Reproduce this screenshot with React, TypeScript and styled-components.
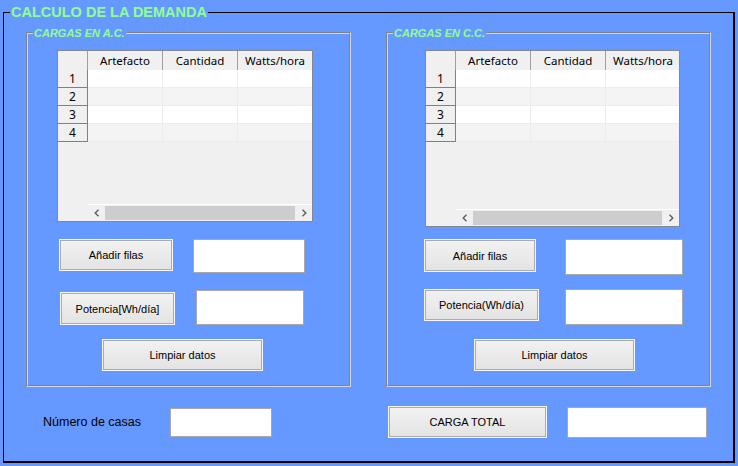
import React from "react";
import styled, { createGlobalStyle } from "styled-components";

const Global = createGlobalStyle`
  *, *::before, *::after { box-sizing: border-box; }
  html, body { margin: 0; padding: 0; background: #6699ff; }
  body { font-family: "Liberation Sans", Arial, sans-serif; }
  #root { width: 738px; height: 466px; overflow: hidden; }
`;

const Page = styled.div`
  padding: 4px 3px 0 3px;
`;

const Frame = styled.fieldset`
  width: 732px;
  margin: 0;
  padding: 0;
  min-inline-size: 0;
  border-style: solid;
  border-color: #000;
  border-width: 1px 2px 2px 1px;
`;

const FrameTitle = styled.legend`
  margin-left: 6px;
  padding: 0 1px;
  font: bold 14.5px/17px "Liberation Sans", Arial, sans-serif;
  color: #90ff90;
`;

const FrameBody = styled.div`
  padding: 5px 0 23px 22px;
`;

const Panels = styled.div`
  display: flex;
  gap: 35px;
`;

const Panel = styled.fieldset`
  width: 325px;
  margin: 0;
  padding: 0 0 14px 0;
  min-inline-size: 0;
  border: 2px groove #d6d6d6;
`;

const PanelTitle = styled.legend`
  margin-left: 5px;
  padding: 0 1px;
  font: italic bold 11px/14px "Liberation Sans", Arial, sans-serif;
  color: #90ff90;
`;

const PanelBody = styled.div`
  padding-top: 10px;
  display: flex;
  flex-direction: column;
`;

const TableBox = styled.div<{ $w: number; $h: number; $x: number }>`
  width: ${(p) => p.$w}px;
  height: ${(p) => p.$h}px;
  margin-left: ${(p) => p.$x}px;
  border: 1px solid #828790;
  background: #f0f0f0;
  display: flex;
  flex-direction: column;
  overflow: hidden;
  font-family: "Noto Sans", "Open Sans", sans-serif;
  font-size: 11.5px;
  color: #000;
`;

const GridRow = styled.div`
  display: flex;
  flex: none;
`;

const Corner = styled.div`
  flex: none;
  width: 30px;
  height: 19px;
  border-right: 1px solid #a0a0a0;
  background: #f0f0f0;
`;

const HeadCell = styled.div`
  flex: none;
  width: 75px;
  height: 19px;
  border-right: 1px solid #a0a0a0;
  background: #f0f0f0;
  display: flex;
  align-items: center;
  justify-content: center;
  white-space: nowrap;
`;

const RowHead = styled.div`
  flex: none;
  width: 30px;
  height: 18px;
  border-right: 1px solid #808080;
  border-bottom: 1px solid #808080;
  background: #f0f0f0;
  display: flex;
  align-items: center;
  justify-content: center;
  font-size: 12px;
`;

const DataCell = styled.div<{ $alt: boolean }>`
  flex: none;
  width: 75px;
  height: 18px;
  border-right: 1px solid #ececec;
  border-bottom: 1px solid #ececec;
  background: ${(p) => (p.$alt ? "#f4f4f4" : "#ffffff")};
`;

const ScrollRow = styled.div`
  margin-top: auto;
  padding-left: 30px;
  display: flex;
  height: 17px;
  flex: none;
`;

const ScrollBar = styled.div`
  flex: 1;
  display: flex;
  border-top: 1px solid #ffffff;
  background: #f0f0f0;
`;

const ScrollArrow = styled.div`
  flex: none;
  width: 17px;
  display: flex;
  align-items: center;
  justify-content: center;
`;

const Thumb = styled.div`
  flex: 1;
  margin: 1px 0;
  background: #cdcdcd;
`;

const Row = styled.div<{ $top: number; $left: number; $gap: number }>`
  display: flex;
  align-items: flex-start;
  margin-top: ${(p) => p.$top}px;
  padding-left: ${(p) => p.$left}px;
  gap: ${(p) => p.$gap}px;
`;

const Btn = styled.button<{ $w: number; $h: number; $dy?: number; $ml?: number }>`
  flex: none;
  width: ${(p) => p.$w}px;
  height: ${(p) => p.$h}px;
  margin: ${(p) => p.$dy ?? 0}px 0 0 ${(p) => p.$ml ?? 0}px;
  padding: 0;
  border: 1px solid #f6f6f6;
  box-shadow: inset 0 0 0 1px #acacac;
  background: linear-gradient(#f2f2f2, #e3e3e3);
  font: 11px "Liberation Sans", Arial, sans-serif;
  color: #000;
`;

const Field = styled.input<{ $w: number; $h: number; $ml?: number }>`
  flex: none;
  width: ${(p) => p.$w}px;
  height: ${(p) => p.$h}px;
  margin: 0 0 0 ${(p) => p.$ml ?? 0}px;
  padding: 0;
  border: 1px solid #a8a8a8;
  background: #fff;
  outline: none;
`;

const BottomRow = styled.div`
  display: flex;
  align-items: center;
  margin-top: 19px;
`;

const Label = styled.div`
  flex: none;
  width: 127px;
  margin-left: 17px;
  font: 12.5px "Liberation Sans", Arial, sans-serif;
  color: #000;
`;

const Chevron = ({ dir }: { dir: "l" | "r" }) => (
  <svg width="6" height="8" viewBox="0 0 6 8">
    <polyline
      points={dir === "l" ? "4.5,0.8 1.2,4 4.5,7.2" : "1.5,0.8 4.8,4 1.5,7.2"}
      fill="none"
      stroke="#5f5f5f"
      strokeWidth="1.4"
    />
  </svg>
);

const DataTable = ({ w, h, x }: { w: number; h: number; x: number }) => (
  <TableBox $w={w} $h={h} $x={x}>
    <GridRow>
      <Corner />
      <HeadCell>Artefacto</HeadCell>
      <HeadCell>Cantidad</HeadCell>
      <HeadCell>Watts/hora</HeadCell>
    </GridRow>
    {[1, 2, 3, 4].map((n) => (
      <GridRow key={n}>
        <RowHead>{n}</RowHead>
        <DataCell $alt={n % 2 === 0} />
        <DataCell $alt={n % 2 === 0} />
        <DataCell $alt={n % 2 === 0} />
      </GridRow>
    ))}
    <ScrollRow>
      <ScrollBar>
        <ScrollArrow>
          <Chevron dir="l" />
        </ScrollArrow>
        <Thumb />
        <ScrollArrow>
          <Chevron dir="r" />
        </ScrollArrow>
      </ScrollBar>
    </ScrollRow>
  </TableBox>
);

export default function App() {
  return (
    <>
      <Global />
      <Page>
        <Frame>
          <FrameTitle>CALCULO DE LA DEMANDA</FrameTitle>
          <FrameBody>
            <Panels>
              <Panel>
                <PanelTitle>CARGAS EN A.C.</PanelTitle>
                <PanelBody>
                  <DataTable w={256} h={172} x={29} />
                  <Row $top={17} $left={31} $gap={20}>
                    <Btn $w={114} $h={32}>Añadir filas</Btn>
                    <Field $w={112} $h={34} readOnly />
                  </Row>
                  <Row $top={17} $left={32} $gap={21}>
                    <Btn $w={115} $h={33} $dy={2}>Potencia[Wh/día]</Btn>
                    <Field $w={108} $h={35} readOnly />
                  </Row>
                  <Row $top={14} $left={74} $gap={0}>
                    <Btn $w={161} $h={32}>Limpiar datos</Btn>
                  </Row>
                </PanelBody>
              </Panel>
              <Panel>
                <PanelTitle>CARGAS EN C.C.</PanelTitle>
                <PanelBody>
                  <DataTable w={255} h={177} x={37} />
                  <Row $top={12} $left={36} $gap={29}>
                    <Btn $w={112} $h={33}>Añadir filas</Btn>
                    <Field $w={118} $h={36} readOnly />
                  </Row>
                  <Row $top={14} $left={36} $gap={26}>
                    <Btn $w={115} $h={32}>Potencia(Wh/día)</Btn>
                    <Field $w={118} $h={36} readOnly />
                  </Row>
                  <Row $top={14} $left={86} $gap={0}>
                    <Btn $w={161} $h={32}>Limpiar datos</Btn>
                  </Row>
                </PanelBody>
              </Panel>
            </Panels>
            <BottomRow>
              <Label>Número de casas</Label>
              <Field $w={102} $h={29} readOnly />
              <Btn $w={159} $h={32} $ml={116}>CARGA TOTAL</Btn>
              <Field $w={140} $h={31} $ml={20} readOnly />
            </BottomRow>
          </FrameBody>
        </Frame>
      </Page>
    </>
  );
}
